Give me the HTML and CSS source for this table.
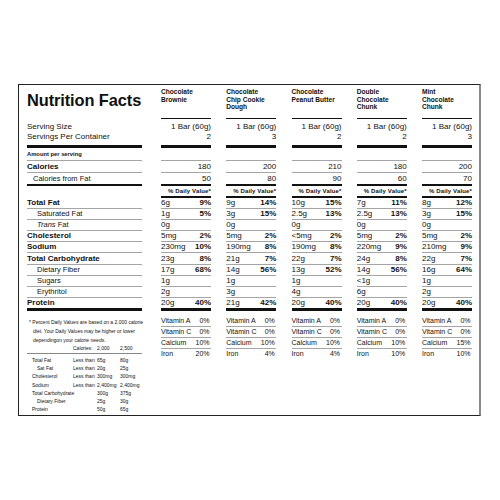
FILE: index.html
```html
<!DOCTYPE html>
<html lang="en">
<head>
    <meta charset="UTF-8">
    <meta name="viewport" content="width=device-width, initial-scale=1.0">
    <title>Nutrition Facts</title>
    <link rel="stylesheet" href="styles.css">
</head>
<body>
    <div class="label">
        <div class="facts" id="facts"></div>
    </div>

    <template id="footnote">
        <p class="note-text">* Percent Daily Values are based on a 2,000 calorie<br>diet. Your Daily Values may be higher or lower<br>dependingon your calorie needs.</p>
        <div class="dv-table">
            <span class="cal-row"></span><span class="cal-row">Calories:</span><span class="cal-row">2,000</span><span class="cal-row">2,500</span>
            <span class="in">Total Fat</span><span>Less than</span><span>65g</span><span>80g</span>
            <span class="in2">Sat Fat</span><span>Less than</span><span>20g</span><span>25g</span>
            <span class="in">Cholesterol</span><span>Less than</span><span>300mg</span><span>300mg</span>
            <span class="in">Sodium</span><span>Less than</span><span>2,400mg</span><span>2,400mg</span>
            <span class="in wide">Total Carbohydrate</span><span>300g</span><span>375g</span>
            <span class="in2">Dietary Fiber</span><span></span><span>25g</span><span>30g</span>
            <span class="in">Protein</span><span></span><span>50g</span><span>65g</span>
        </div>
    </template>

    <script>
        const products = [
            { name: 'Chocolate<br>Brownie', servings: 2, cal: 180, fat: 50,
              n: [['6g', '9%'], ['1g', '5%'], ['0g', ''], ['5mg', '2%'], ['230mg', '10%'], ['23g', '8%'], ['17g', '68%'], ['1g', ''], ['2g', ''], ['20g', '40%']],
              vit: ['0%', '0%', '10%', '20%'] },
            { name: 'Chocolate<br>Chip Cookie<br>Dough', servings: 3, cal: 200, fat: 80,
              n: [['9g', '14%'], ['3g', '15%'], ['0g', ''], ['5mg', '2%'], ['190mg', '8%'], ['21g', '7%'], ['14g', '56%'], ['1g', ''], ['3g', ''], ['21g', '42%']],
              vit: ['0%', '0%', '10%', '4%'] },
            { name: 'Chocolate<br>Peanut Butter', servings: 2, cal: 210, fat: 90,
              n: [['10g', '15%'], ['2.5g', '13%'], ['0g', ''], ['&lt;5mg', '2%'], ['190mg', '8%'], ['22g', '7%'], ['13g', '52%'], ['1g', ''], ['4g', ''], ['20g', '40%']],
              vit: ['0%', '0%', '10%', '4%'] },
            { name: 'Double<br>Chocolate<br>Chunk', servings: 2, cal: 180, fat: 60,
              n: [['7g', '11%'], ['2.5g', '13%'], ['0g', ''], ['5mg', '2%'], ['220mg', '9%'], ['24g', '8%'], ['14g', '56%'], ['&lt;1g', ''], ['6g', ''], ['20g', '40%']],
              vit: ['0%', '0%', '10%', '10%'] },
            { name: 'Mint<br>Chocolate<br>Chunk', servings: 3, cal: 200, fat: 70,
              n: [['8g', '12%'], ['3g', '15%'], ['0g', ''], ['5mg', '2%'], ['210mg', '9%'], ['22g', '7%'], ['16g', '64%'], ['1g', ''], ['2g', ''], ['20g', '40%']],
              vit: ['0%', '0%', '15%', '10%'] }
        ];
        const nutrients = [
            ['Total Fat', 'main'], ['Saturated Fat', 'sub'], ['<i>Trans</i>&nbsp;Fat', 'sub'],
            ['Cholesterol', 'main'], ['Sodium', 'main'], ['Total Carbohydrate', 'main'],
            ['Dietary Fiber', 'sub'], ['Sugars', 'sub'], ['Erythritol', 'sub'], ['Protein', 'main']
        ];
        const vitamins = ['Vitamin A', 'Vitamin C', 'Calcium', 'Iron'];
        const grid = document.getElementById('facts');

        function addCell(cls, html) {
            const div = document.createElement('div');
            div.className = 'cell ' + cls;
            div.innerHTML = html;
            grid.appendChild(div);
        }
        function addRow(labelCls, labelHtml, prodCls, prodHtml) {
            addCell('lab ' + labelCls, labelHtml);
            products.forEach(p => addCell('prod ' + prodCls, prodHtml(p)));
        }

        addRow('head', '<h1>Nutrition Facts</h1>', 'head name', p => p.name);
        addRow('serving thick', '<span>Serving Size</span><span>Servings Per Container</span>',
            'serving thick right', p => '<span>1 Bar (60g)</span><span>' + p.servings + '</span>');
        addRow('amount thin', 'Amount per serving', 'thin', p => '');
        addRow('main thin', 'Calories', 'thin right', p => p.cal);
        addRow('indent mid', 'Calories from Fat', 'mid right', p => p.fat);
        addRow('', '', 'dv mid right', p => '% Daily Value*');
        nutrients.forEach(([text, kind], i) => {
            const line = i === nutrients.length - 1 ? 'thick' : 'thin';
            addRow(kind + ' ' + line, text, 'split ' + line,
                p => '<span>' + p.n[i][0] + '</span><b>' + p.n[i][1] + '</b>');
        });
        addRow('note', document.getElementById('footnote').innerHTML, 'vits',
            p => vitamins.map((v, i) => '<div class="vit"><span>' + v + '</span><span>' + p.vit[i] + '</span></div>').join(''));
    </script>
</body>
</html>
```
FILE: styles.css
```css
body {
    margin: 0;
    background-color: #fff;
    color: #111;
    font-family: "Liberation Sans", Arial, sans-serif;
}
.label {
    box-sizing: border-box;
    width: 463px;
    height: 332px;
    margin: 84px 0 0 18px;
    padding: 3px 0 0 8px;
    border: 1px solid #222;
    border-right: 2px solid #8a8a8a;
}
.facts {
    display: grid;
    grid-template-columns: 118.75px repeat(5, 50px);
    grid-template-rows: 31px 29px 13px 12px 13px 11.5px repeat(9, 11.2px) 13px 104px;
    column-gap: 15.25px;
}
.cell {
    box-sizing: border-box;
    display: flex;
    align-items: center;
    font-size: 8px;
    line-height: 10px;
    white-space: nowrap;
}
.lab {
    margin-right: 3.75px;
}
.right {
    justify-content: flex-end;
}
.thin {
    border-bottom: 1px solid #a5a5a5;
}
.mid {
    border-bottom: 2px solid #111;
}
.thick {
    border-bottom: 3px solid #111;
}
.head {
    align-items: flex-start;
}
.head h1 {
    margin: 0;
    padding-top: 4px;
    font-size: 16.4px;
    font-weight: 900;
    line-height: 16px;
    letter-spacing: -0.1px;
}
.name {
    font-size: 6.6px;
    font-weight: bold;
    line-height: 7.5px;
    border-bottom: 1px solid #111;
    display: block;
}
.serving {
    flex-direction: column;
    align-items: flex-start;
    justify-content: flex-start;
    padding-top: 3px;
}
.serving.right {
    align-items: flex-end;
}
.amount {
    font-size: 5.8px;
    font-weight: bold;
}
.main {
    font-weight: bold;
}
.indent {
    padding-left: 6px;
    font-size: 7.5px;
}
.sub {
    padding-left: 10px;
    font-size: 7.5px;
}
.dv {
    font-size: 6px;
    font-weight: bold;
    letter-spacing: 0.15px;
}
.split {
    justify-content: space-between;
}
.split b {
    font-weight: bold;
}
.note,
.vits {
    display: block;
}
.note-text {
    margin: 0;
    padding: 7px 0 0 6px;
    text-indent: -4px;
    font-size: 5px;
    line-height: 9px;
}
.dv-table {
    display: grid;
    grid-template-columns: 46px 24px 23px 1fr;
    font-size: 5px;
    line-height: 8.3px;
}
.dv-table .cal-row {
    line-height: 7px;
    padding-bottom: 1px;
    margin-bottom: 1.5px;
    border-bottom: 1px solid #888;
}
.dv-table .in {
    padding-left: 5px;
}
.dv-table .in2 {
    padding-left: 10px;
}
.dv-table .wide {
    grid-column: span 2;
}
.vits {
    padding-top: 5px;
}
.vit {
    display: flex;
    justify-content: space-between;
    height: 11px;
    box-sizing: border-box;
    font-size: 7px;
    line-height: 10px;
    border-bottom: 1px solid #a5a5a5;
}
.vit span:last-child {
    padding-right: 1.5px;
}
.vit:last-child {
    border-bottom: none;
}
```
